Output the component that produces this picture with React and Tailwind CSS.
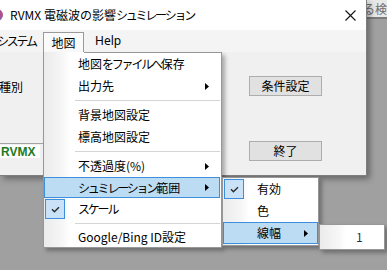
import React from "react";

const K = ({ children }) => <span className="tracking-[-2.2px]">{children}</span>;

const Arrow = () => (
  <svg width="4" height="7" viewBox="0 0 4 7" className="shrink-0">
    <path d="M0 0 L4 3.5 L0 7 Z" fill="#000" />
  </svg>
);

const Check = () => (
  <div className="w-[20px] h-[20px] shrink-0 flex items-center justify-center bg-[#c9e2f7] border border-[#3d8fdc]">
    <svg width="9" height="7" viewBox="0 0 9 7">
      <path d="M1 3.3 L3.4 5.7 L8 1.2" stroke="#2b2b2b" strokeWidth="1.4" fill="none" />
    </svg>
  </div>
);

const Item = ({ children, arrow }) => (
  <div className="h-[22px] flex items-center pl-[34px] pr-[12px] justify-between">
    <span className="whitespace-nowrap">{children}</span>
    {arrow && <Arrow />}
  </div>
);

const Sep = ({ h = "h-[7px]" }) => (
  <div className={`${h} flex items-center pl-[31px] pr-[1px]`}>
    <div className="h-px w-full bg-[#d4d4d4]" />
  </div>
);

const gutter =
  "bg-[linear-gradient(90deg,#ebebeb_0px,#f6f6f6_18px,#ffffff_26px)]";

export default function App() {
  return (
    <div className="relative w-[387px] h-[270px] overflow-hidden bg-[#a0a0a0] text-[12px] leading-[16px] text-black font-['Noto_Sans_CJK_JP',sans-serif]">
      <div className="flex">
        {/* App window */}
        <div className="relative z-10 w-[369px] h-[176px] flex flex-col bg-[#f0f0f0] border-r border-b border-[#7f7f7f] shadow-[3px_3px_6px_rgba(0,0,0,0.35)]">
          {/* Title bar */}
          <div className="h-[30px] bg-white flex items-center shrink-0">
            <div className="w-[12px] h-[12px] ml-[-9px] rounded-full bg-[radial-gradient(circle_at_70%_40%,#c04a7a,#5a6fd0)]" />
            <span className="ml-[7px] whitespace-nowrap">
              RVMX 電磁波の影響<K>シュミレーション</K>
            </span>
            <svg width="11" height="11" viewBox="0 0 11 11" className="ml-auto mr-[10px] shrink-0">
              <path d="M0.5 0.5 L10.5 10.5 M10.5 0.5 L0.5 10.5" stroke="#111" strokeWidth="1.1" />
            </svg>
          </div>
          {/* Menu bar */}
          <div className="h-[22px] bg-[#f4f4f4] flex items-end shrink-0">
            <div className="h-[22px] flex items-center ml-[-3px] w-[46px] whitespace-nowrap">
              <K>システム</K>
            </div>
            <div className="h-[20px] w-[41px] flex items-center justify-center border-t border-l border-r border-[#9a9a9a] bg-[#fafafa]">
              地図
            </div>
            <div className="h-[22px] flex items-center ml-[11px] font-['Noto_Sans',sans-serif]">
              Help
            </div>
          </div>
          {/* Client */}
          <div className="flex-1 flex">
            <div className="w-[249px] flex flex-col">
              <div className="mt-[27px] ml-[-1px]">種別</div>
              <div className="flex-1" />
              <div className="w-[200px] h-[32px] border-t border-[#a3a3a3] pt-[1px]">
                <div className="w-[40px] h-[13px] bg-white flex items-center pl-[1px] text-[#1d7a1d] font-bold font-['Liberation_Sans',sans-serif] text-[12px]">
                  RVMX
                </div>
              </div>
            </div>
            <div className="w-[73px] flex flex-col">
              <div className="mt-[24px] h-[20px] flex items-center justify-center bg-[#e1e1e1] border border-[#adadad]">
                条件設定
              </div>
              <div className="mt-[45px] h-[20px] flex items-center justify-center bg-[#e1e1e1] border border-[#adadad]">
                終了
              </div>
            </div>
          </div>
        </div>
        {/* Right strip: other window */}
        <div className="flex-1 flex flex-col">
          <div className="h-[17px] bg-[#e8e8e8] text-[#6f6f6f] flex items-center ml-[-4px] overflow-hidden whitespace-nowrap">
            る検
          </div>
          <div className="h-[2px] bg-[#7c7c7c]" />
        </div>
      </div>

      {/* Main dropdown menu */}
      <div className={`absolute z-20 left-[43px] top-[52px] w-[179px] h-[196px] border-l border-r border-b border-[#979797] ${gutter} shadow-[3px_3px_4px_rgba(0,0,0,0.3)]`}>
        <div className="absolute left-[40px] right-[-1px] top-0 h-px bg-[#979797]" />
        <div className="pt-[1px] flex flex-col">
          <Item>
            地図<K>をファイルへ</K>保存
          </Item>
          <Item arrow>出力先</Item>
          <Sep />
          <Item>背景地図設定</Item>
          <Item>標高地図設定</Item>
          <Sep />
          <Item arrow>不透過度(%)</Item>
          <div className="h-[22px] flex items-start pr-[1px]">
            <div className="h-[21px] w-full flex items-center justify-between pl-[33px] pr-[10px] bg-[#bcdcf4] border border-[#3d8fdc]">
              <span className="whitespace-nowrap">
                <K>シュミレーション</K>範囲
              </span>
              <Arrow />
            </div>
          </div>
          <div className="h-[22px] flex items-start">
            <div className="ml-[1px]">
              <Check />
            </div>
            <div className="h-[20px] flex items-center ml-[13px]">
              <K>スケール</K>
            </div>
          </div>
          <Sep h="h-[5px]" />
          <Item>Google/Bing ID設定</Item>
        </div>
      </div>

      {/* Submenu: シュミレーション範囲 */}
      <div className={`absolute z-30 left-[222px] top-[177px] w-[97px] h-[69px] border border-[#979797] ${gutter} shadow-[3px_3px_4px_rgba(0,0,0,0.3)] flex flex-col`}>
        <div className="h-[22px] flex items-start">
          <div className="ml-[1px] mt-[1px]">
            <Check />
          </div>
          <div className="h-[22px] flex items-center ml-[13px]">有効</div>
        </div>
        <div className="h-[22px] flex items-center pl-[34px]">色</div>
        <div className="h-[22px] flex items-center justify-between pl-[33px] pr-[9px] bg-[#bcdcf4] border border-[#3d8fdc]">
          <span>線幅</span>
          <Arrow />
        </div>
      </div>

      {/* Submenu: 線幅 */}
      <div className={`absolute z-40 left-[319px] top-[224px] w-[66px] h-[26px] border border-[#979797] ${gutter} shadow-[3px_3px_4px_rgba(0,0,0,0.3)] flex items-center pl-[36px] text-[#1e3558]`}>
        1
      </div>
    </div>
  );
}
